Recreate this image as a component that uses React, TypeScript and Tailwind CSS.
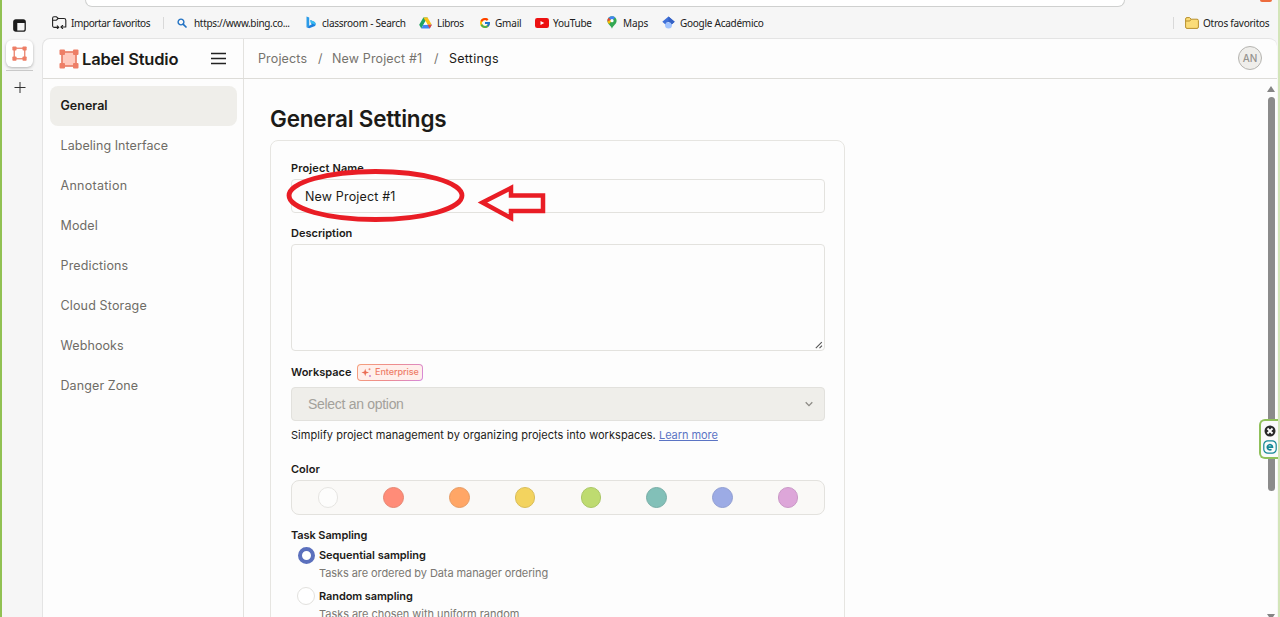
import React from "react";
import { FcGoogle } from "react-icons/fc";

function FrameIcon({ className, filled }: { className: string; filled?: boolean }) {
  return (
    <svg viewBox="0 0 20 20" className={className}>
      <rect x="3" y="3" width="14" height="14" fill={filled ? "#ffc9bd" : "none"} stroke="#e9806a" strokeWidth="1.7" />
      {[0.5, 14].map((x) =>
        [0.5, 14].map((y) => <rect key={`${x}-${y}`} x={x} y={y} width="5.5" height="5.5" rx="1" fill="#ee7e66" />),
      )}
    </svg>
  );
}

function ImportIcon() {
  return (
    <svg viewBox="0 0 15 13" className="h-[13px] w-[15px]" fill="none" stroke="#222" strokeWidth="1.1" strokeLinecap="round" strokeLinejoin="round">
      <path d="M4 11.400H2.200A1.600 1.600 0 0 1 .6 9.800V2.200A1.400 1.400 0 0 1 2 .8h2.500l1.800 1.700H12a1.800 1.800 0 0 1 1.800 1.800V11H9.200" />
      <path d="M.8 4.200h3.600l1.700-1.700M4 11.400h2.600M5.300 9.900 6.800 11.400 5.300 12.600M10.600 9.500 9.100 11l1.500 1.500" />
    </svg>
  );
}

function SearchIcon() {
  return (
    <svg viewBox="0 0 10 10" className="h-[10px] w-[10px]" fill="none" stroke="#2272c3" strokeLinecap="round">
      <circle cx="4" cy="4" r="2.900" strokeWidth="1.400" />
      <path d="m6.300 6.300 2.700 2.700" strokeWidth="1.700" />
    </svg>
  );
}

function BingIcon() {
  return (
    <svg viewBox="0 0 10 13" className="h-[13px] w-[10px]">
      <path d="M.5.6 3.200 1.600v8.500L.5 11.300Z" fill="#2a9be8" />
      <path d="m4.300 4 3.900 1.700a2.800 2.800 0 0 1 .8 4.200L3.200 12.300.5 11.200l5.300-3L4.900 7Z" fill="#1c7fdd" />
      <path d="m4.300 4 3.900 1.700a2.800 2.800 0 0 1 1.200 3L5.800 7.600 4.900 7Z" fill="#37bdf0" />
    </svg>
  );
}

function DriveIcon() {
  return (
    <svg viewBox="0 0 13 12" className="h-[12px] w-[13px]">
      <path d="M4.400.5h4.200L4.400 7.800 2.300 11.400.2 7.800Z" fill="#1fa463" />
      <path d="M4.400.5h4.200l4.200 7.300H8.600Z" fill="#fbc116" />
      <path d="M4.400 7.800h8.400l-2.100 3.600H2.300Z" fill="#4285f4" />
      <path d="M8.600 7.800h4.200l-2.100 3.600Z" fill="#ea4335" />
      <path d="M6.500 4.200 8.600 7.800H4.400Z" fill="#fff" />
    </svg>
  );
}

function YouTubeIcon() {
  return (
    <svg viewBox="0 0 14 10" className="h-[10px] w-[14px]">
      <rect width="14" height="10" rx="2.200" fill="#ec1111" />
      <path d="m5.500 2.900 3.800 2.100-3.800 2.100Z" fill="#fff" />
    </svg>
  );
}

function MapsIcon() {
  return (
    <svg viewBox="0 0 10 13" className="h-[13px] w-[10px]">
      <path d="M5 .2A4.600 4.600 0 0 0 .4 4.800C.4 8.200 4 9.500 5 12.800 6 9.500 9.600 8.200 9.600 4.800A4.600 4.600 0 0 0 5 .2Z" fill="#34a853" />
      <path d="M5 .2A4.600 4.600 0 0 0 1.500 1.800L5 4.800l3.200-3.200A4.600 4.600 0 0 0 5 .2Z" fill="#4285f4" />
      <path d="M1.500 1.800A4.600 4.600 0 0 0 .5 5.500L4 4Z" fill="#ea4335" />
      <path d="M.5 5.500A5 5 0 0 0 2 8L5 4.800 4 3.700Z" fill="#fbbc04" />
      <circle cx="5" cy="4.700" r="1.600" fill="#fff" />
    </svg>
  );
}

function ScholarIcon() {
  return (
    <svg viewBox="0 0 13 13" className="h-[13px] w-[13px]">
      <path d="M3 6.500h7V9a3.500 3.500 0 0 1-7 0Z" fill="#a0c3ff" />
      <path d="M6.500.6 12.700 5.800 9.900 8.200a3.800 3.800 0 0 0-6.800 0L.3 5.800Z" fill="#3f70d8" />
      <path d="M6.500.6 12.700 5.800 9.900 8.200a3.800 3.800 0 0 0-3.400-2.100Z" fill="#3561c4" />
    </svg>
  );
}

function FolderIcon() {
  return (
    <svg viewBox="0 0 14 12" className="h-[12px] w-[14px]" strokeWidth="1" stroke="#b8902c" strokeLinejoin="round">
      <path d="M.6 2A1.400 1.400 0 0 1 2 .6h2.600L6.200 2.200H12a1.400 1.400 0 0 1 1.400 1.400V10a1.400 1.400 0 0 1-1.400 1.400H2A1.400 1.400 0 0 1 .6 10Z" fill="#fbdc78" />
      <path d="M.6 4h4.200l1.400-1.800" fill="none" />
    </svg>
  );
}

const bookmarks: { label: string; icon: React.ReactNode; slot: string; box: string; text: string }[] = [
  { label: "https://www.bing.co...", icon: <SearchIcon />, slot: "w-[129px]", box: "w-[17px]", text: "tracking-[-0.33px]" },
  { label: "classroom - Search", icon: <BingIcon />, slot: "w-[113px]", box: "w-[16px]", text: "tracking-[-0.24px]" },
  { label: "Libros", icon: <DriveIcon />, slot: "w-[60px]", box: "w-[18px]", text: "tracking-[-0.32px]" },
  { label: "Gmail", icon: <FcGoogle className="size-[12px]" />, slot: "w-[56px]", box: "w-[16px]", text: "tracking-[-0.2px]" },
  { label: "YouTube", icon: <YouTubeIcon />, slot: "w-[72px]", box: "w-[18px]", text: "tracking-[-0.24px]" },
  { label: "Maps", icon: <MapsIcon />, slot: "w-[55px]", box: "w-[16px]", text: "tracking-[-0.15px]" },
  { label: "Google Académico", icon: <ScholarIcon />, slot: "w-[110px]", box: "w-[18px]", text: "tracking-[-0.26px]" },
];

function BookmarkBar() {
  return (
    <div className="flex h-[32px] shrink-0 items-center pl-[10px] pr-[8px] pt-px font-['Noto_Sans',sans-serif] text-[10px] leading-4 whitespace-nowrap text-[#202020]">
      <div className="flex w-[111px] items-center gap-1">
        <ImportIcon />
        <span className="tracking-[-0.4px]">Importar favoritos</span>
      </div>
      <div className="mr-[13px] h-3 w-px bg-[#d9d9d9]" />
      {bookmarks.map((b) => (
        <div key={b.label} className={`flex shrink-0 items-center ${b.slot}`}>
          <span className={`flex shrink-0 ${b.box}`}>{b.icon}</span>
          <span className={b.text}>{b.label}</span>
        </div>
      ))}
      <div className="ml-auto flex items-center">
        <div className="mr-[11px] h-3 w-px bg-[#d9d9d9]" />
        <FolderIcon />
        <span className="ml-[4px] w-[67px] tracking-[-0.25px]">Otros favoritos</span>
      </div>
    </div>
  );
}

function TabStrip() {
  return (
    <div className="flex w-[40px] shrink-0 flex-col items-center pt-[13px] pr-[5px]">
      <svg viewBox="0 0 13 13" className="h-[13px] w-[13px] shrink-0">
        <rect x=".8" y=".8" width="11.400" height="11.400" rx="2" fill="none" stroke="#1c1c1c" strokeWidth="1.300" />
        <path d="M1 1h11v3H4.300v8H1Z" fill="#1c1c1c" />
      </svg>
      <div className="mt-[8px] flex size-[27px] items-center justify-center rounded-md bg-white shadow-[0_1px_3px_rgba(0,0,0,0.28)]">
        <FrameIcon className="size-[15px]" />
      </div>
      <div className="mt-[3px] h-px w-[27px] bg-[#c9c9c9]" />
      <svg viewBox="0 0 12 12" className="mt-[11px] size-[12px]" stroke="#333" strokeWidth="1">
        <path d="M.5 5.500h11M6 0v11" />
      </svg>
    </div>
  );
}

const nav = [
  { label: "Labeling Interface", tracking: "tracking-[0.06px]" },
  { label: "Annotation", tracking: "tracking-[0.28px]" },
  { label: "Model", tracking: "tracking-[0.1px]" },
  { label: "Predictions", tracking: "tracking-[0.15px]" },
  { label: "Cloud Storage", tracking: "tracking-[0.15px]" },
  { label: "Webhooks", tracking: "tracking-[0.1px]" },
  { label: "Danger Zone", tracking: "tracking-[0.1px]" },
];

const swatches = [
  "bg-[#fdfdfc] border-[#e6e5e2]",
  "bg-[#ff8c78] border-[#e68571]",
  "bg-[#ffa666] border-[#e69b63]",
  "bg-[#f3d35e] border-[#d9bd59]",
  "bg-[#bedb70] border-[#abc766]",
  "bg-[#82c0b8] border-[#77ada6]",
  "bg-[#9cabe5] border-[#909ed2]",
  "bg-[#dda6d9] border-[#ca99c7]",
];

function SideMenu() {
  return (
    <aside className="w-[201px] shrink-0 border-r border-[#e3e2df] pt-[7px] pr-[6px] pl-[7px]">
      <div className="flex h-10 items-center rounded-lg bg-[#efeeea] px-[10.500px] text-[12.5px] font-semibold text-[#1c1b18]">General</div>
      {nav.map((n) => (
        <div key={n.label} className={`flex h-10 items-center px-[10.500px] pt-px text-[12.5px] text-[#6f6c66] ${n.tracking}`}>{n.label}</div>
      ))}
    </aside>
  );
}

const label = "text-[11px] leading-4 font-semibold text-[#1c1b18]";
const hint = "pl-[28px] text-[11px] leading-4 text-[#7b7872]";

function SettingsForm() {
  return (
    <main className="min-h-0 flex-1 pt-[24px] pl-[26px]">
      <h1 className="text-[22.5px] leading-8 font-semibold tracking-[-0.2px] text-[#1c1b18]">General Settings</h1>
      <section className="mt-[5px] h-[520px] w-[575px] rounded-lg border border-[#e6e5e1] pt-[19px] pr-[19px] pl-[20px]">
        <div className={`tracking-[0.13px] ${label}`}>Project Name</div>
        <div className="mt-[3px] flex h-[34px] items-center rounded border border-[#e3e2de] pt-[2px] pl-[13px] text-[12.5px] tracking-[0.16px] text-[#1c1b18]">New Project #1</div>
        <div className={`mt-[12px] ${label}`}>Description</div>
        <div className="mt-[3px] flex h-[107px] items-end justify-end rounded border border-[#e3e2de] pr-[1px] pb-[1px]">
          <svg viewBox="0 0 8 8" className="size-[8px]" stroke="#555" strokeWidth="1.100">
            <path d="M.8 7.200 6.800 1.200M4.500 7.200l2.500-2.500" />
          </svg>
        </div>
        <div className="mt-[12px] flex h-[18px] items-center">
          <span className={`w-[66px] pb-px ${label}`}>Workspace</span>
          <span className="rounded-[4px] bg-[linear-gradient(120deg,#f5a07c,#ee8c8c_50%,#d58ade)] p-px">
            <span className="flex h-[15px] w-[64px] items-center rounded-[3px] bg-[#ffefeb] pl-[3px] text-[9px] font-medium tracking-[-0.05px] text-[#ee7d68]">
              <svg viewBox="0 0 11 11" className="mr-[3px] size-[11px] shrink-0">
                <path d="M4.200 1.800 5.100 4.600 8 5.500 5.100 6.400 4.200 9.200 3.300 6.400.5 5.500 3.300 4.600Z" fill="#ea6d55" />
                <circle cx="8.500" cy="2.200" r="1" fill="#ef8d79" />
                <circle cx="9" cy="9" r="1" fill="#c886ce" />
              </svg>
              Enterprise
            </span>
          </span>
        </div>
        <div className="mt-[6px] flex h-[34px] items-center justify-between rounded border border-[#e2e1dd] bg-[#efeeea] pr-[11px] pl-[16px] font-['Liberation_Sans',sans-serif] text-[14px] tracking-[-0.3px] text-[#a3a19b]">
          Select an option
          <svg viewBox="0 0 8 8" className="size-[8px]" fill="none" stroke="#8d8b86" strokeWidth="1.300">
            <path d="m.7 2.300 3.300 3.300 3.300-3.300" />
          </svg>
        </div>
        <div className="mt-[6px] text-[11px] leading-4 tracking-[0.04px] whitespace-nowrap text-[#1c1b18]">
          Simplify project management by organizing projects into workspaces.{" "}
          <a className="tracking-[-0.05px] text-[#5b74c4] underline">Learn more</a>
        </div>
        <div className={`mt-[18px] ${label}`}>Color</div>
        <div className="mt-[3px] flex h-[35px] items-center justify-around rounded-lg border border-[#e3e2de] bg-[#faf9f7] px-[3px]">
          {swatches.map((s) => (
            <span key={s} className={`size-[20.500px] rounded-full border ${s}`} />
          ))}
        </div>
        <div className={`mt-[12px] tracking-[-0.1px] ${label}`}>Task Sampling</div>
        <div className="mt-[3px] flex h-[18px] items-center pl-[7px]">
          <span className="mr-[4px] size-[17px] rounded-full border-4 border-[#5b70bd] bg-white" />
          <span className={`tracking-[-0.05px] ${label}`}>Sequential sampling</span>
        </div>
        <div className={`mt-[1px] tracking-[-0.08px] ${hint}`}>Tasks are ordered by Data manager ordering</div>
        <div className="mt-[6px] flex h-[18px] items-center pl-[6px]">
          <span className="mr-[4px] size-[18px] rounded-full border border-[#e2e1de] bg-white" />
          <span className={`tracking-[-0.08px] ${label}`}>Random sampling</span>
        </div>
        <div className={`mt-[1px] tracking-[-0.04px] ${hint}`}>Tasks are chosen with uniform random</div>
      </section>
    </main>
  );
}

function ScrollRail() {
  return (
    <div className="flex w-[12px] shrink-0 flex-col items-center pt-[7px]">
      <svg viewBox="0 0 8 6" className="h-[6px] w-[8px] shrink-0"><path d="M4 0 8 6H0Z" fill="#858585" /></svg>
      <div className="mt-[5px] h-[394px] w-[7px] shrink-0 rounded-full bg-[#8b8b8b]" />
      <svg viewBox="0 0 8 6" className="mt-[123px] h-[6px] w-[8px] shrink-0"><path d="M0 0H8L4 6Z" fill="#858585" /></svg>
    </div>
  );
}

export default function App() {
  return (
    <div className="relative flex h-[617px] w-[1280px] flex-col overflow-hidden border-r-2 border-l-2 border-r-[#d3e5b9] border-l-[#91c153] bg-[#f6f6f6] font-['Inter',sans-serif]">
      <div className="flex h-[7px] shrink-0 justify-between pl-[83px]">
        <div className="h-[7px] w-[1040px] rounded-b-[9px] border border-t-0 border-[#cfd0cf] bg-white" />
        <div className="mr-[6px] h-[2px] w-[12px] rounded-b bg-[#ed6c3e]" />
      </div>
      <div className="-mt-px flex min-h-0 flex-1">
        <TabStrip />
        <div className="flex min-w-0 flex-1 flex-col">
          <BookmarkBar />
          <div className="mr-px flex min-h-0 flex-1 flex-col overflow-hidden rounded-t-[8px] border-t border-l border-[#e4e4e4] bg-[#fdfdfd]">
            <header className="flex h-[40px] shrink-0 border-b border-[#dddcd8]">
              <div className="flex w-[201px] shrink-0 items-center border-r border-[#e3e2df] pl-[16px]">
                <FrameIcon className="size-[20px] shrink-0" filled />
                <span className="ml-[3px] w-[129px] pt-px text-[16.5px] font-semibold tracking-[-0.2px] whitespace-nowrap text-[#1c1b18]">Label Studio</span>
                <svg viewBox="0 0 15 13" className="h-[13px] w-[15px]" stroke="#222" strokeWidth="1.400">
                  <path d="M0 1.500h15M0 6.500h15M0 11.500h15" />
                </svg>
              </div>
              <div className="flex flex-1 items-center pt-[2px] pl-[14px] text-[12.5px] tracking-[0.14px] whitespace-nowrap text-[#76736d]">
                <span className="w-[60px]">Projects</span>
                <span className="w-[14px]">/</span>
                <span className="w-[102px]">New Project #1</span>
                <span className="w-[15px]">/</span>
                <span className="tracking-[0.25px] text-[#1c1b18]">Settings</span>
              </div>
              <div className="mt-[7px] mr-[15px] flex size-[24px] items-center justify-center rounded-full border border-[#b5b4b0] bg-[#efeeeb] text-[10px] font-medium text-[#96948f]">AN</div>
            </header>
            <div className="flex min-h-0 flex-1">
              <SideMenu />
              <SettingsForm />
              <ScrollRail />
            </div>
          </div>
        </div>
      </div>
      <svg viewBox="0 0 270 60" className="absolute top-[165px] left-[278px] h-[60px] w-[270px]" fill="none" stroke="#e91d25" strokeWidth="4.800">
        <ellipse cx="95.500" cy="30.500" rx="86.500" ry="24" />
        <path d="M202.500 37.500 231 23V30.500H263V46H231V53Z" strokeWidth="4.500" />
      </svg>
      <div className="absolute top-[419px] -right-[2px] flex h-[40px] w-[21px] flex-col items-center gap-[3px] rounded-l-[6px] border-2 border-r-0 border-[#8fc05a] bg-[#fafafa] pt-[4px] pr-[1px]">
        <svg viewBox="0 0 12 12" className="size-[12px]">
          <circle cx="6" cy="6" r="5.500" fill="#292929" />
          <path d="m3.500 3.500 5 5m0-5-5 5" stroke="#fff" strokeWidth="1.900" />
        </svg>
        <svg viewBox="0 0 14 14" className="size-[14px]" fill="none" stroke="#148796">
          <rect x=".8" y=".8" width="12.400" height="12.400" rx="4" strokeWidth="1.200" />
          <path d="M4.500 7.100h5a2.600 2.600 0 1 0-1 2.200" strokeWidth="1.600" />
        </svg>
      </div>
    </div>
  );
}
